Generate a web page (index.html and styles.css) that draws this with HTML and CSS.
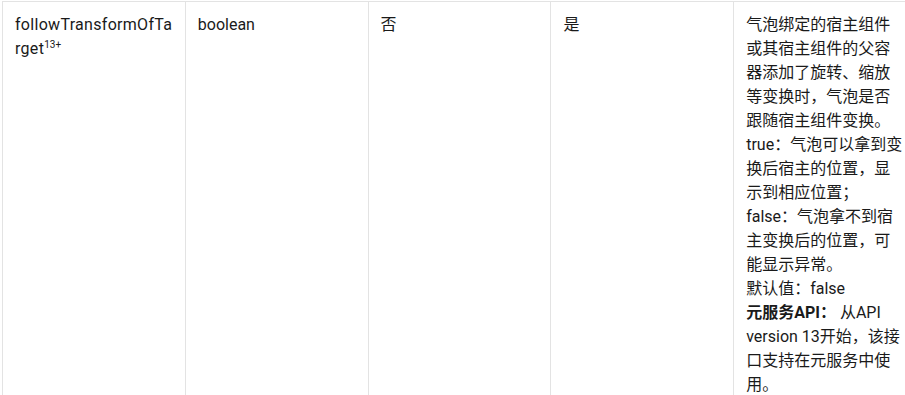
FILE: index.html
```html
<!DOCTYPE html>
<html lang="zh-CN">
<head>
<meta charset="utf-8">
<title>followTransformOfTarget</title>
<link rel="stylesheet" href="styles.css">
</head>
<body>
<div class="wrap">
<table class="api">
<colgroup><col class="c"><col class="c"><col class="c"><col class="c"><col class="c"></colgroup>
<tbody>
<tr>
<td class="name">followTransformOfTarget<sup>13+</sup></td>
<td>boolean</td>
<td>否</td>
<td>是</td>
<td class="desc"><p>气泡绑定的宿主组件或其宿主组件的父容器添加了旋转、缩放等变换时，气泡是否跟随宿主组件变换。</p><p>true：气泡可以拿到变换后宿主的位置，显示到相应位置；</p><p>false：气泡拿不到宿主变换后的位置，可能显示异常。</p><p>默认值：false</p><p><strong>元服务API：</strong> 从API version 13开始，该接口支持在元服务中使用。</p></td>
</tr>
</tbody>
</table>
</div>
</body>
</html>
```
FILE: styles.css
```css
html, body {
  margin: 0;
  padding: 0;
  overflow: hidden;
  background: #ffffff;
}
.wrap {
  padding: 1px 0 0 2px;
}
.api {
  border-collapse: collapse;
  table-layout: fixed;
  width: 915px;
  font-family: "Roboto", "Noto Sans CJK SC", sans-serif;
  font-size: 16px;
  line-height: 24px;
  color: #1a1a1a;
}
.api td {
  border: 1px solid #e3e3e3;
  padding: 11px 12px 12px 12px;
  vertical-align: top;
  overflow-wrap: break-word;
}
.api td.name {
  word-break: break-all;
  letter-spacing: 0.3px;
}
.api p {
  margin: 0;
}
.api strong {
  font-weight: 700;
}
.api sup {
  font-size: 10px;
  line-height: 0;
  vertical-align: 6px;
  letter-spacing: 0;
}
```
